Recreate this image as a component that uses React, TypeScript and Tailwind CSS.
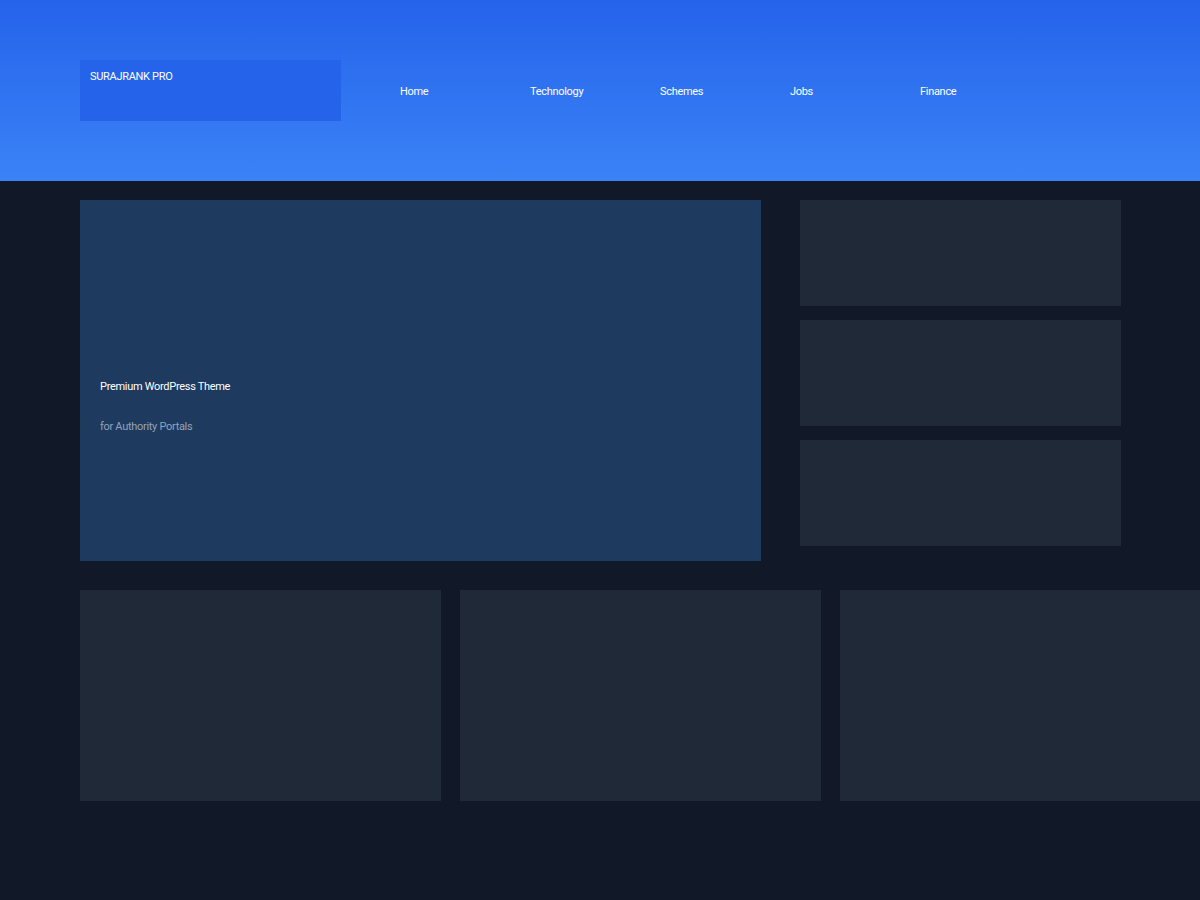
const navItems = ['Home', 'Technology', 'Schemes', 'Jobs', 'Finance'];

export default function App() {
  return (
    <div
      className="min-h-[900px] w-[1200px] overflow-hidden bg-[#111827] text-[11px] leading-none tracking-[-0.3px] text-white"
      style={{ fontFamily: 'Roboto, "Liberation Sans", sans-serif' }}
    >
      {/* Header */}
      <header className="h-[181px] bg-gradient-to-b from-[#2563eb] to-[#3b82f6] pl-[80px] pt-[60px]">
        <div className="flex items-start">
          <div className="h-[61px] w-[261px] bg-[#2563eb] pl-[10px] pt-[11px]">SURAJRANK PRO</div>
          <nav className="ml-[59px] flex h-[61px] items-center pt-[2px]">
            {navItems.map((item) => (
              <a key={item} className="w-[130px]">
                {item}
              </a>
            ))}
          </nav>
        </div>
      </header>

      {/* Top section */}
      <section className="flex gap-[39px] pl-[80px] pt-[19px]">
        <div className="h-[361px] w-[681px] bg-[#1e3a5f] pl-[20px] pt-[181px]">
          <p>Premium WordPress Theme</p>
          <p className="mt-[29px] text-[#94a3b8]">for Authority Portals</p>
        </div>
        <div className="flex flex-col gap-[14px]">
          <div className="h-[106px] w-[321px] bg-[#1f2937]" />
          <div className="h-[106px] w-[321px] bg-[#1f2937]" />
          <div className="h-[106px] w-[321px] bg-[#1f2937]" />
        </div>
      </section>

      {/* Bottom cards */}
      <section className="flex gap-[19px] pl-[80px] pt-[29px]">
        <div className="h-[211px] w-[361px] shrink-0 bg-[#1f2937]" />
        <div className="h-[211px] w-[361px] shrink-0 bg-[#1f2937]" />
        <div className="h-[211px] w-[361px] shrink-0 bg-[#1f2937]" />
      </section>
    </div>
  );
}
